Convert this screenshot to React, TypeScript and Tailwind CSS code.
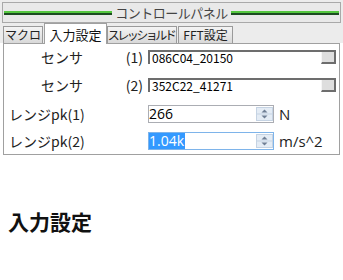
import React from 'react';

const jp = { fontFamily: '"Noto Sans CJK JP", "Noto Sans", sans-serif' };

function Spinner() {
  return (
    <svg width="17" height="14" viewBox="0 0 17 14" className="shrink-0">
      <rect x="0.5" y="0.5" width="16" height="13" fill="#e4ecf5" stroke="#c5d3e3" />
      <line x1="1" y1="7" x2="16" y2="7" stroke="#c5d3e3" />
      <path d="M5.5 5.5 L8.5 2.5 L11.5 5.5 Z" fill="#6f7f95" />
      <path d="M5.5 8.5 L8.5 11.5 L11.5 8.5 Z" fill="#6f7f95" />
    </svg>
  );
}

function SensorRow({ idx, value }: { idx: string; value: string }) {
  return (
    <div className="flex items-center h-[14px]">
      <div className="w-[79px] text-right text-[14px] leading-none text-[#222]">センサ</div>
      <div className="w-[60px] text-right text-[14px] leading-none text-[#222]">({idx})</div>
      <div className="ml-[5px] flex h-[14px] w-[188px] border-t-2 border-l-2 border-t-[#6d6d6d] border-l-[#6d6d6d] bg-white">
        <div className="flex-1 pl-[2px] text-[12px] leading-[12px] text-black">{value}</div>
        <div className="shrink-0 w-[15px] h-[12px] bg-[#dedede] border-r-2 border-b-2 border-r-[#6d6d6d] border-b-[#6d6d6d] border-l border-l-[#f6f6f6]" />
      </div>
    </div>
  );
}

function RangeRow({ label, value, unit, focused }: { label: string; value: string; unit: string; focused?: boolean }) {
  return (
    <div className="flex items-center h-[18px]">
      <div className="w-[144px] pl-[5px] text-[14px] leading-none text-[#222]">{label}</div>
      <div
        className={
          focused
            ? 'flex items-center w-[126px] h-[18px] border border-[#7eb4ea] bg-white'
            : 'flex items-center w-[126px] h-[18px] border border-[#abadb3] bg-white'
        }
      >
        <div className="flex-1 flex h-full items-center text-[14px] leading-none" style={{ fontFamily: '"Open Sans", "Noto Sans", sans-serif' }}>
          {focused ? (
            <span className="flex h-full items-center bg-[#3399ff] text-white pr-[1px]">{value}</span>
          ) : (
            <span className="text-black">{value}</span>
          )}
        </div>
        <Spinner />
      </div>
      <div className="ml-[5px] text-[15px] leading-none text-[#222]" style={{ fontFamily: '"Open Sans", "Noto Sans", sans-serif' }}>
        {unit}
      </div>
    </div>
  );
}

export default function App() {
  const tabs = [
    { t: 'マクロ', w: 'w-[40px]' },
    { t: '入力設定', w: 'w-[63px]' },
    { t: 'スレッショルド', w: 'w-[70px] tracking-[-2.5px] pr-[2px]' },
    { t: 'FFT設定', w: 'w-[55px]' },
  ];
  const active = 1;
  return (
    <div className="w-[343px] h-[280px] bg-white overflow-hidden" style={jp}>
      <div className="bg-[#ececec] pt-[2px]">
        <div className="mx-[2px] h-[21px] border border-[#a9a9a9] bg-[#e9e9e9] flex items-center px-[1px]">
          <div className="flex-1 flex flex-col">
            <div className="h-[2px] bg-[#55c840]" />
            <div className="h-[2px] bg-[#1d4d22]" />
          </div>
          <div className="px-[3px] text-[13px] leading-none text-[#444] tracking-[-0.5px]">コントロールパネル</div>
          <div className="flex-1 flex flex-col">
            <div className="h-[2px] bg-[#55c840]" />
            <div className="h-[2px] bg-[#1d4d22]" />
          </div>
        </div>
        <div className="flex items-end h-[20px] pl-[3px]">
          {tabs.map((tab, i) =>
            i === active ? (
              <div
                key={tab.t}
                className={`${tab.w} relative z-10 -mb-px h-[21px] bg-white border border-b-0 border-[#a0a0a0] flex items-center justify-center whitespace-nowrap text-[13px] leading-none text-[#111]`}
              >
                {tab.t}
              </div>
            ) : (
              <div
                key={tab.t}
                className={`${tab.w} h-[17px] mr-[1px] border border-b-0 border-[#9a9a9a] bg-gradient-to-b from-[#f4f4f4] to-[#d9d9d9] flex items-center justify-center whitespace-nowrap text-[12px] leading-none text-[#222]`}
              >
                {tab.t}
              </div>
            )
          )}
        </div>
      </div>
      <div className="ml-[3px] w-[337px] h-[112px] border border-[#a0a0a0] bg-white flex flex-col pt-[6px] gap-[14px]">
        <SensorRow idx="1" value="086C04_20150" />
        <SensorRow idx="2" value="352C22_41271" />
        <div className="flex flex-col gap-[9px] mt-[-1px]">
          <RangeRow label="レンジpk(1)" value="266" unit="N" />
          <RangeRow label="レンジpk(2)" value="1.04k" unit="m/s^2" focused />
        </div>
      </div>
      <div className="pl-[8px] pt-[56px] text-[21px] font-bold leading-none text-[#111]">入力設定</div>
    </div>
  );
}
